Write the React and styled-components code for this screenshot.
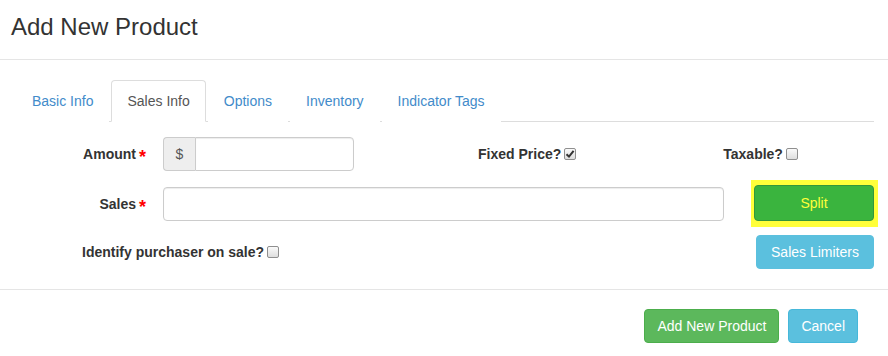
import React from 'react';
import styled, { createGlobalStyle } from 'styled-components';

const GlobalStyle = createGlobalStyle`
  body {
    margin: 0;
    background: #fff;
    font-family: "Liberation Sans", Arial, sans-serif;
    font-size: 14px;
    color: #333;
  }
`;

const Header = styled.div`
  padding: 14px 15px 19px 11px;
  border-bottom: 1px solid #e5e5e5;
`;

const Title = styled.h4`
  margin: 0;
  font-size: 24px;
  line-height: 26px;
  font-weight: normal;
  color: #333;
`;

const Body = styled.div`
  padding: 20px 14px 20px 16px;
`;

const Tabs = styled.ul`
  display: flex;
  margin: 0;
  padding: 0;
  list-style: none;
  border-bottom: 1px solid #ddd;
`;

const Tab = styled.li`
  margin: 0 2px -1px 0;
  padding: 10px 15px;
  line-height: 20px;
  border: 1px solid ${p => (p.$active ? '#ddd' : 'transparent')};
  border-bottom-color: ${p => (p.$active ? '#fff' : 'transparent')};
  border-radius: 4px 4px 0 0;
  background: #fff;
  color: ${p => (p.$active ? '#555' : '#428bca')};
  cursor: pointer;
`;

const Row = styled.div`
  display: flex;
  align-items: center;
  height: ${p => p.$h || 34}px;
  margin-top: ${p => p.$mt}px;
  & > * {
    flex-shrink: 0;
  }
`;

const Label = styled.label`
  width: 130px;
  padding-right: 17px;
  text-align: right;
  font-weight: bold;
`;

const Star = styled.span`
  color: #f00;
  font-size: 18px;
  line-height: 0;
  margin-left: 3px;
  vertical-align: -4px;
`;

const InputGroup = styled.div`
  display: flex;
  width: 191px;
  height: 34px;
`;

const Addon = styled.span`
  width: 32px;
  display: flex;
  align-items: center;
  justify-content: center;
  background: #eee;
  border: 1px solid #ccc;
  border-right: 0;
  border-radius: 4px 0 0 4px;
  color: #555;
`;

const Input = styled.input`
  box-sizing: border-box;
  height: 34px;
  width: ${p => p.$w}px;
  border: 1px solid #ccc;
  border-radius: ${p => (p.$grouped ? '0 4px 4px 0' : '4px')};
  box-shadow: inset 0 1px 1px rgba(0, 0, 0, 0.075);
  padding: 6px 12px;
  font: inherit;
  outline: none;
`;

const CheckLabel = styled.span`
  display: inline-flex;
  align-items: center;
  font-weight: bold;
  margin-left: ${p => p.$ml}px;
`;

const Box = styled.span`
  box-sizing: border-box;
  display: inline-flex;
  align-items: center;
  justify-content: center;
  width: 12px;
  height: 12px;
  margin-left: 3px;
  border: 1px solid #8f8f8f;
  border-radius: 2px;
  background: linear-gradient(#fafafa, #dedede);
`;

const Check = ({ checked }) => (
  <Box>
    {checked && (
      <svg width="10" height="10" viewBox="0 0 10 10">
        <path d="M1.5 5.2 L4 7.6 L8.6 1.8" fill="none" stroke="#333" strokeWidth="2" />
      </svg>
    )}
  </Box>
);

const Highlight = styled.div`
  margin-left: 27px;
  margin-right: -4px;
  padding: 5px 4px 6px 3px;
  background: #ffff3a;
`;

const Button = styled.button`
  box-sizing: border-box;
  height: ${p => p.$h || 34}px;
  width: ${p => (p.$w ? `${p.$w}px` : 'auto')};
  margin-left: ${p => (p.$push ? 'auto' : '0')};
  padding: 6px 12px;
  font: inherit;
  font-size: 14px;
  color: ${p => p.$fg || '#fff'};
  background: ${p => p.$bg};
  border: 1px solid ${p => p.$border};
  border-radius: 4px;
  cursor: pointer;
`;

const Purchaser = styled.span`
  display: inline-flex;
  align-items: center;
  padding-left: 66px;
  font-weight: bold;
`;

const Footer = styled.div`
  display: flex;
  justify-content: flex-end;
  gap: 9px;
  padding: 19px 30px 15px;
  border-top: 1px solid #e5e5e5;
`;

export default function App() {
  return (
    <>
      <GlobalStyle />
      <Header>
        <Title>Add New Product</Title>
      </Header>
      <Body>
        <Tabs>
          <Tab>Basic Info</Tab>
          <Tab $active>Sales Info</Tab>
          <Tab>Options</Tab>
          <Tab>Inventory</Tab>
          <Tab>Indicator Tags</Tab>
        </Tabs>
        <Row $mt={15}>
          <Label>
            Amount<Star>*</Star>
          </Label>
          <InputGroup>
            <Addon>$</Addon>
            <Input $w={159} $grouped />
          </InputGroup>
          <CheckLabel $ml={124}>
            Fixed Price?<Check checked />
          </CheckLabel>
          <CheckLabel $ml={147}>
            Taxable?<Check />
          </CheckLabel>
        </Row>
        <Row $mt={9} $h={47}>
          <Label>
            Sales<Star>*</Star>
          </Label>
          <Input $w={561} />
          <Highlight>
            <Button $w={120} $h={36} $bg="#3ab43e" $border="#34963a" $fg="#ffff3a">
              Split
            </Button>
          </Highlight>
        </Row>
        <Row $mt={8}>
          <Purchaser>
            Identify purchaser on sale?<Check />
          </Purchaser>
          <Button $push $w={118} $bg="#5bc0de" $border="#5bc0de">
            Sales Limiters
          </Button>
        </Row>
      </Body>
      <Footer>
        <Button $bg="#5cb85c" $border="#4cae4c">Add New Product</Button>
        <Button $bg="#5bc0de" $border="#46b8da">Cancel</Button>
      </Footer>
    </>
  );
}
